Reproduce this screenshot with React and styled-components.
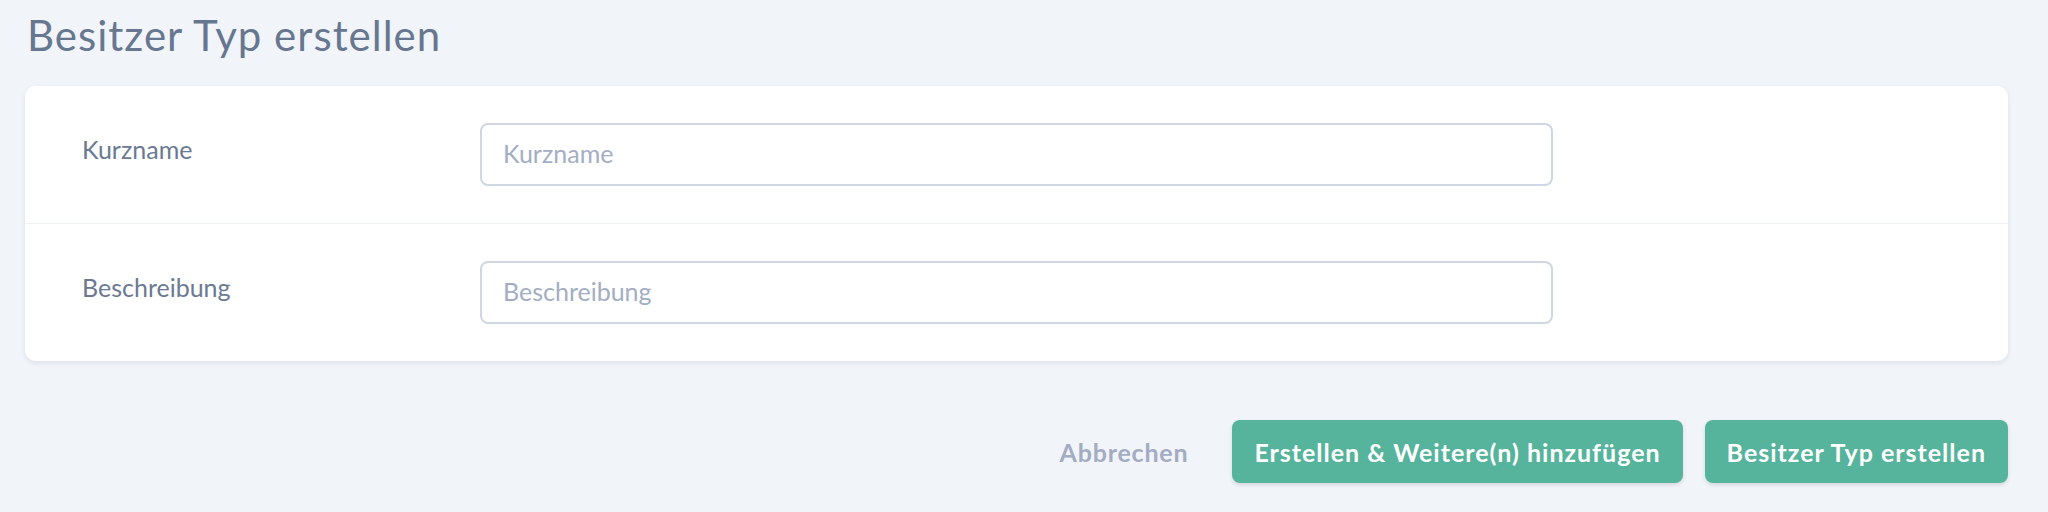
import React from 'react'
import styled, { createGlobalStyle } from 'styled-components'

const GlobalStyle = createGlobalStyle`
    html, body {
        margin: 0;
        padding: 0;
        background: #f1f4f9;
        font-family: Lato, "Noto Sans", sans-serif;
    }
    * {
        box-sizing: border-box;
    }
`

const fields = [
    { name: 'kurzname', label: 'Kurzname' },
    { name: 'beschreibung', label: 'Beschreibung' },
]

const App = () => {
    return (
        <>
            <GlobalStyle />
            <Page>
                <Heading>Besitzer Typ erstellen</Heading>
                <Card>
                    {fields.map(field => (
                        <FieldRow key={field.name}>
                            <Label htmlFor={field.name}>{field.label}</Label>
                            <Input id={field.name} type="text" placeholder={field.label} />
                        </FieldRow>
                    ))}
                </Card>
                <Actions>
                    <CancelLink href="#">Abbrechen</CancelLink>
                    <Button type="button">Erstellen &amp; Weitere(n) hinzufügen</Button>
                    <Button type="submit">Besitzer Typ erstellen</Button>
                </Actions>
            </Page>
        </>
    )
}

export default App

const Page = styled.div`
    width: 2048px;
    height: 512px;
    padding: 9px 40px 0 25px;
`
const Heading = styled.h1`
    margin: 0 0 25px 2px;
    font-size: 42px;
    line-height: 52px;
    font-weight: 400;
    letter-spacing: 1px;
    color: #677790;
`
const Card = styled.div`
    background: #fff;
    border-radius: 11px;
    box-shadow: 0 2px 5px rgba(40, 60, 100, 0.1);
`
const FieldRow = styled.div`
    display: grid;
    grid-template-columns: 455px 1073px;
    align-items: start;
    padding: 37px 0;
    & + & {
        border-top: 1px solid #eef2f7;
    }
`
const Label = styled.label`
    padding: 11px 0 0 57px;
    font-size: 25px;
    line-height: 30px;
    color: #6b7a92;
`
const Input = styled.input`
    height: 63px;
    padding: 0 21px 3px;
    border: 2px solid #cfd7e3;
    border-radius: 8px;
    font-family: inherit;
    font-size: 25px;
    color: #4a5568;
    background: #fff;
    outline: none;
    &::placeholder {
        color: #a3aec2;
    }
`
const Actions = styled.div`
    display: flex;
    justify-content: flex-end;
    align-items: center;
    gap: 22px;
    margin-top: 59px;
`
const CancelLink = styled.a`
    margin-right: 22px;
    font-size: 25px;
    font-weight: 700;
    letter-spacing: 0.8px;
    color: #a3acc2;
    text-decoration: none;
`
const Button = styled.button`
    height: 63px;
    padding: 0 22px;
    border: none;
    border-radius: 8px;
    background: #55b49b;
    box-shadow: 0 2px 4px rgba(0, 0, 0, 0.12);
    font-family: inherit;
    font-size: 25px;
    font-weight: 700;
    letter-spacing: 1px;
    color: #fff;
    cursor: pointer;
`
